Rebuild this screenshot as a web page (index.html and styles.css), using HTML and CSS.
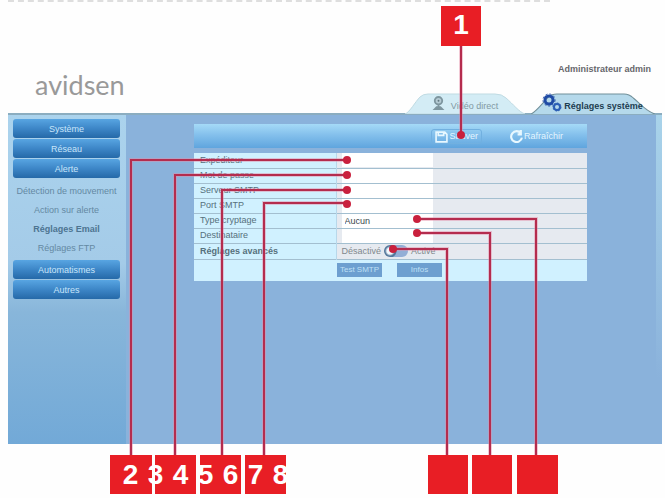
FILE: index.html
```html
<!DOCTYPE html>
<html lang="fr">
<head>
  <meta charset="UTF-8" />
  <title>avidsen - Réglages Email</title>
  <link rel="stylesheet" href="styles.css">
</head>
<body>

  <div class="top-edge"></div>

  <header class="header">
    <div class="logo">avidsen</div>
    <div class="header-right">
      <div class="user">Administrateur admin</div>
      <nav class="tabs">
        <a href="#" class="tab">
          <svg class="tab-shape" viewBox="0 0 120 21" preserveAspectRatio="none">
            <path d="M0 21 C5 19 10 9 15 4 Q18 1 23 1 H90 Q97 1 101 5 C108 11 114 19 120 21 Z" fill="#d3ecf5" stroke="#c0dbe3" />
          </svg>
          <svg class="icon" viewBox="0 0 14 16">
            <circle cx="7" cy="5" r="4" fill="#b5cbd4" stroke="#7e969f" stroke-width="2" />
            <circle cx="7" cy="5" r="1" fill="#60777f" />
            <path d="M7 9 V12 M3 14 L5 12 H9 L11 14 Z" fill="#8ba2ab" stroke="#7e969f" stroke-width="2" />
          </svg>
          <span>Vidéo direct</span>
        </a>
        <a href="#" class="tab active">
          <svg class="tab-shape" viewBox="0 0 120 21" preserveAspectRatio="none">
            <path d="M0 21 C5 19 12 9 17 4 Q20 1 25 1 H90 Q95 1 99 5 C106 11 112 19 120 21" fill="#b5d9eb" stroke="#71909a" />
          </svg>
          <svg class="icon gears" viewBox="0 0 18 16">
            <circle cx="6" cy="5" r="4" fill="none" stroke="#1f4ba5" stroke-width="3" />
            <circle cx="6" cy="5" r="6" fill="none" stroke="#1f4ba5" stroke-width="1" stroke-dasharray="2 2" />
            <circle cx="14" cy="12" r="3" fill="none" stroke="#2b5fb5" stroke-width="2" />
            <circle cx="14" cy="12" r="4" fill="none" stroke="#2b5fb5" stroke-width="1" stroke-dasharray="2 1" />
          </svg>
          <span>Réglages système</span>
        </a>
      </nav>
    </div>
  </header>

  <div class="workspace">
    <nav class="sidebar">
      <button class="menu">Système</button>
      <button class="menu">Réseau</button>
      <button class="menu">Alerte</button>
      <div class="submenu">
        <a href="#">Détection de mouvement</a>
        <a href="#">Action sur alerte</a>
        <a href="#" class="current">Réglages Email</a>
        <a href="#">Réglages FTP</a>
      </div>
      <button class="menu">Automatismes</button>
      <button class="menu">Autres</button>
    </nav>

    <main class="content">
      <div class="toolbar">
        <button class="tool framed">
          <svg class="tool-icon" viewBox="0 0 12 12">
            <path d="M1 2 H9 L11 4 V11 H1 Z M3 2 V5 H8 V2" fill="none" stroke="#e8f8ff" stroke-width="1.5" />
          </svg>
          Sauver
        </button>
        <button class="tool">
          <svg class="tool-icon" viewBox="0 0 12 12">
            <path d="M10 3 A5 5 0 1 0 11 7 M10 0 V4 H7" fill="none" stroke="#e8f8ff" stroke-width="2" />
          </svg>
          Rafraîchir
        </button>
      </div>

      <form class="panel">
        <table class="settings">
          <tr>
            <th><label for="sender">Expéditeur</label></th>
            <td><input type="text" id="sender" /></td>
          </tr>
          <tr>
            <th><label for="password">Mot de passe</label></th>
            <td><input type="password" id="password" /></td>
          </tr>
          <tr>
            <th><label for="server">Serveur SMTP</label></th>
            <td><input type="text" id="server" /></td>
          </tr>
          <tr>
            <th><label for="port">Port SMTP</label></th>
            <td><input type="text" id="port" /></td>
          </tr>
          <tr>
            <th><label for="crypt">Type cryptage</label></th>
            <td>
              <select id="crypt">
                <option>Aucun</option>
                <option>SSL</option>
                <option>TLS</option>
              </select>
            </td>
          </tr>
          <tr>
            <th><label for="recipient">Destinataire</label></th>
            <td><input type="text" id="recipient" /></td>
          </tr>
          <tr class="advanced">
            <th><label for="advanced">Réglages avancés</label></th>
            <td>
              <div class="switch">
                <span>Désactivé</span>
                <input type="checkbox" id="advanced" />
                <span>Activé</span>
              </div>
            </td>
          </tr>
        </table>
        <div class="actions">
          <button type="button">Test SMTP</button>
          <button type="button">Infos</button>
        </div>
      </form>
    </main>
  </div>

  <footer class="footer"></footer>

  <!-- numbered callouts over the screen -->
  <div class="callouts">
    <svg class="leaders" width="665" height="498" viewBox="0 0 665 498">
      <g class="halo">
        <path d="M461 46 V135" />
        <path d="M131 455 V160 H347" />
        <path d="M175 455 V175 H347" />
        <path d="M222 455 V190 H347" />
        <path d="M264 455 V203 H347" />
        <path d="M447 455 V249 H393" />
        <path d="M490 455 V233 H417" />
        <path d="M536 455 V219 H417" />
      </g>
      <g class="line">
        <path d="M461 46 V135" />
        <path d="M131 455 V160 H347" />
        <path d="M175 455 V175 H347" />
        <path d="M222 455 V190 H347" />
        <path d="M264 455 V203 H347" />
        <path d="M447 455 V249 H393" />
        <path d="M490 455 V233 H417" />
        <path d="M536 455 V219 H417" />
      </g>
      <g class="dots">
        <circle cx="461" cy="135" r="4" />
        <circle cx="347" cy="160" r="4" />
        <circle cx="347" cy="175" r="4" />
        <circle cx="347" cy="190" r="4" />
        <circle cx="347" cy="204" r="4" />
        <circle cx="393" cy="249" r="4" />
        <circle cx="417" cy="233" r="4" />
        <circle cx="417" cy="219" r="4" />
      </g>
      <g class="boxes">
        <rect x="441" y="6" width="40" height="40" />
        <rect x="110" y="455" width="42" height="39" />
        <rect x="155" y="455" width="41" height="39" />
        <rect x="200" y="455" width="41" height="39" />
        <rect x="245" y="455" width="41" height="39" />
        <rect x="428" y="455" width="40" height="39" />
        <rect x="472" y="455" width="40" height="39" />
        <rect x="517" y="455" width="41" height="39" />
      </g>
    </svg>
    <div class="number-top">1</div>
    <div class="numbers">
      <span>2</span><span>3</span><span>4</span><span>5</span><span>6</span><span>7</span><span>8</span>
    </div>
  </div>

</body>
</html>
```
FILE: styles.css
```css
* {
  box-sizing: border-box;
}

body {
  margin: 0;
  min-height: 100vh;
  display: flex;
  flex-direction: column;
  position: relative;
  background: #fefefe;
  font-family: "Liberation Sans", Arial, sans-serif;
  font-size: 9px;
  color: #56707c;
}

a {
  color: inherit;
  text-decoration: none;
}

button, input, select {
  font: inherit;
  border: 0;
  margin: 0;
  padding: 0;
}

.top-edge {
  margin: 0 115px 0 8px;
  border-top: 2px dashed #dedede;
}

.header {
  display: flex;
  justify-content: space-between;
  align-items: flex-end;
  height: 111px;
  padding: 0 10px 0 35px;
}

.logo {
  font-family: Lato, sans-serif;
  font-size: 27px;
  line-height: 30px;
  padding-bottom: 13px;
  color: #999;
}

.header-right {
  display: flex;
  flex-direction: column;
  gap: 18px;
}

.user {
  text-align: right;
  padding-right: 4px;
  font-weight: bold;
  line-height: 12px;
  color: #66666c;
}

.tabs {
  display: flex;
  gap: 6px;
}

.tab {
  position: relative;
  display: flex;
  align-items: center;
  justify-content: center;
  gap: 6px;
  width: 120px;
  height: 20px;
  color: #8199a3;
}

.tab span {
  position: relative;
  padding-top: 6px;
}

.tab.active {
  width: 124px;
  gap: 3px;
  font-weight: bold;
  color: #1d3d50;
}

.tab-shape {
  position: absolute;
  left: 0;
  top: 0;
  width: 100%;
  height: 21px;
}

.icon {
  position: relative;
  width: 13px;
  height: 15px;
}

.icon.gears {
  width: 18px;
  height: 16px;
  overflow: visible;
}

.workspace {
  flex: 1;
  display: flex;
  margin: 0 3px 0 8px;
  border-top: 2px solid #8badc0;
}

.sidebar {
  display: flex;
  flex-direction: column;
  gap: 1px;
  width: 118px;
  padding: 4px 6px 0 5px;
  background: linear-gradient(#abd3ed, #a4cbe8 45%, #88b6da 60%, #72a9d7);
}

.menu {
  height: 19px;
  border-radius: 3px;
  background: linear-gradient(#58a5e2, #3d86c7 50%, #2569a8);
  color: #c9e6fa;
}

.submenu {
  display: flex;
  flex-direction: column;
  padding: 3px 0 1px;
  text-align: center;
  white-space: nowrap;
  line-height: 19px;
  color: #6489a3;
}

.submenu .current {
  font-weight: bold;
  color: #4d7491;
}

.content {
  flex: 1;
  padding: 9px 75px 0 68px;
  background: linear-gradient(#a9d3ea, #8ab2db 80%) right / 6px 100% no-repeat #8ab2db;
}

.toolbar {
  display: flex;
  justify-content: flex-end;
  align-items: center;
  gap: 24px;
  height: 24px;
  margin-bottom: 5px;
  padding-right: 20px;
  background: linear-gradient(#a5daf7, #84c0ec 45%, #5fa5de);
}

.tool {
  display: flex;
  align-items: center;
  justify-content: center;
  gap: 1px;
  height: 15px;
  padding: 0 4px;
  border-radius: 3px;
  background: transparent;
  color: #e4f6ff;
}

.tool.framed {
  padding: 0 3px;
  border: 1px solid #71b0e0;
}

.tool-icon {
  width: 13px;
  height: 13px;
}

.panel {
  background: #d0f1ff;
}

.settings {
  width: 100%;
  border-collapse: collapse;
  table-layout: fixed;
}

.settings tr {
  height: 15px;
  border-bottom: 1px solid #a3bfd0;
}

.settings .advanced {
  height: 16px;
}

.settings th {
  width: 142px;
  padding: 0 6px;
  text-align: left;
  font-weight: normal;
  line-height: 13px;
  border-right: 1px solid #b8d8ea;
}

.settings .advanced th {
  font-weight: bold;
}

.settings td {
  padding: 0 0 0 5px;
  background: #e6eaf0;
}

.settings td input,
.settings td select {
  display: block;
  width: 91px;
  height: 14px;
  background: #fff;
}

.settings td select {
  appearance: none;
  padding-left: 3px;
  color: #39464d;
}

.switch {
  display: flex;
  align-items: center;
  gap: 3px;
  color: #81888d;
}

.settings .switch input {
  appearance: none;
  width: 24px;
  height: 12px;
  border-radius: 6px;
  background: radial-gradient(circle at 6px 6px, #f2f8fc 3px, #53779b 5px, #53779b 6px, #93aed6 7px);
}

.actions {
  display: flex;
  gap: 15px;
  height: 21px;
  padding: 3px 0 4px 143px;
}

.actions button {
  width: 45px;
  background: #6d9fd0;
  color: #bfe0f6;
  font-size: 8px;
}

.footer {
  height: 54px;
}

.callouts {
  position: absolute;
  left: 0;
  top: 0;
  pointer-events: none;
  font-size: 28px;
  font-weight: bold;
  line-height: 40px;
  text-align: center;
  color: #fff;
}

.leaders {
  display: block;
}

.halo {
  fill: none;
  stroke: #e58ba5;
  stroke-width: 4;
  opacity: 0.45;
}

.line {
  fill: none;
  stroke: #b42c4e;
  stroke-width: 2;
}

.dots {
  fill: #c9203d;
}

.boxes {
  fill: #e81e25;
}

.number-top {
  position: absolute;
  left: 441px;
  top: 5px;
  width: 40px;
}

.numbers {
  position: absolute;
  left: 118px;
  top: 455px;
  display: flex;
}

.numbers span {
  width: 25px;
}
```
